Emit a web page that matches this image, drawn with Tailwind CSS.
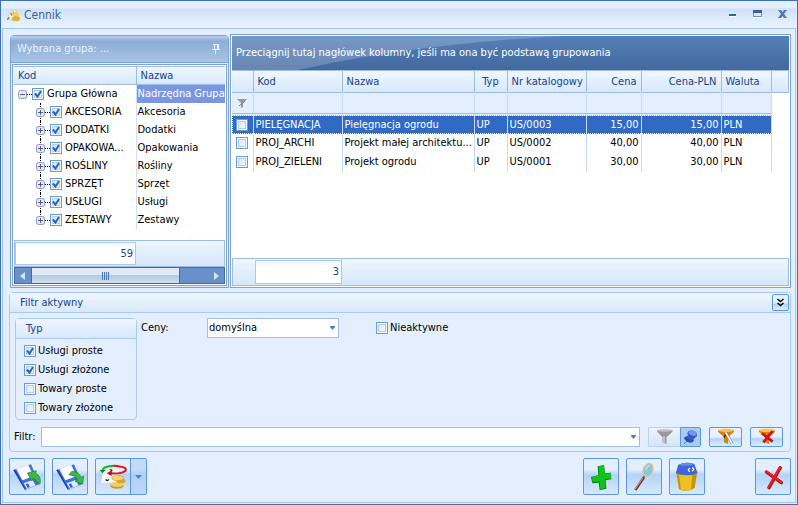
<!DOCTYPE html>
<html lang="pl">

<head>
    <meta charset="UTF-8">
    <meta name="viewport" content="width=device-width, initial-scale=1.0">
    <title>Cennik</title>
    <script src="https://cdn.jsdelivr.net/npm/@tailwindcss/browser@4"></script>
</head>

<body class="font-['DejaVu_Sans_Condensed','DejaVu_Sans',sans-serif] text-[11px] leading-4 text-black bg-[#e3efff]">

    <div class="min-h-screen flex flex-col border border-[#3c72b5] px-px pb-px">

        <!-- title bar -->
        <header class="h-[27px] shrink-0 flex items-center pl-1 pr-1 bg-linear-to-b from-[#e4f0ff] from-25% via-[#cfe1f8] via-30% to-[#ebf4ff]">
            <svg class="size-[14px]" viewBox="0 0 48 48">
                <path d="M6 38 14 10 34 6 40 30 24 42z" fill="#f4f4f4" stroke="#bbb" stroke-width="2" />
                <path d="M4 40l8-8M16 16l4 10M24 12l3 6" stroke="#666" stroke-width="4" />
                <ellipse cx="32" cy="22" rx="12" ry="8" fill="#f3d054" />
                <ellipse cx="34" cy="36" rx="14" ry="9" fill="#e0b42c" />
            </svg>
            <h1 class="pl-1 text-xs text-[#3a5f97]">Cennik</h1>
            <div class="ml-auto flex gap-[5px]">
                <button aria-label="Minimalizuj" class="size-5 grid place-items-center">
                    <svg class="size-3" viewBox="0 0 12 12" shape-rendering="crispEdges"><path d="M3 5h7v2H3z" fill="#3d5f96" /><path d="M3 7h7v1H3z" fill="#fff" /></svg>
                </button>
                <button aria-label="Maksymalizuj" class="size-5 grid place-items-center">
                    <svg class="size-3" viewBox="0 0 12 12" shape-rendering="crispEdges"><path d="M2 1h9v3H2z" fill="#3d5f96" /><path d="M2 4h1v3h7V4h1v4H2z" fill="#7393c2" /><path d="M2 8h9v1H2z" fill="#fff" /></svg>
                </button>
                <button aria-label="Zamknij okno" class="size-5 grid place-items-center">
                    <svg class="size-3" viewBox="0 0 12 12"><path d="M2 1h3l1.500 2L8 1h3L8 5l3 4H8L6.500 7 5 9H2l3-4z" fill="#5577ad" /></svg>
                </button>
            </div>
        </header>

        <main class="flex-1 flex flex-col border border-[#a3c5f0] pl-1.5 pr-1 pt-[5px] pb-[7px]">

            <div class="flex gap-px pl-px">

                <!-- group tree -->
                <section class="w-[219px] shrink-0 mt-px flex flex-col border border-[#7ba3d6] rounded-t-sm">
                    <div class="h-[26px] flex items-center justify-between pl-1.5 pr-2 bg-linear-to-b from-[#b9cfeb] via-[#8dadd6] via-20% to-[#a9c4e6] text-[#e8f1fc]">
                        <h2>Wybrana grupa: ...</h2>
                        <button aria-label="Przypnij">
                            <svg class="w-2 h-3" viewBox="0 0 8 12" shape-rendering="crispEdges"><path d="M1 1h6v1H1zM2 2h1v4H2zM5 2h2v4H5zM0 6h8v1H0zM3 7h1v4H3z" fill="#e8f1fc" /></svg>
                        </button>
                    </div>
                    <div class="flex-1 flex flex-col border-t border-[#7ba3d6] p-px">
                        <div class="flex-1 flex flex-col border border-[#7ba3d6] bg-white p-px overflow-hidden">
                            <table class="w-full table-fixed">
                                <colgroup>
                                    <col class="w-[122px]">
                                    <col>
                                </colgroup>
                                <thead>
                                    <tr class="h-[18px] bg-linear-to-b from-[#f0f7ff] to-[#d6e7fa] text-left text-[#15428b]">
                                        <th class="border-y border-r border-[#9ebbe0] pl-1 font-normal">Kod</th>
                                        <th class="border-y border-[#9ebbe0] pl-1 font-normal">Nazwa</th>
                                    </tr>
                                </thead>
                                <tbody id="treeRows"></tbody>
                            </table>
                            <div class="mt-auto h-[27px] shrink-0 flex border border-[#9ebbe0] bg-linear-to-b from-[#eff6ff] to-[#d6e7fa] text-[#15428b]">
                                <output class="w-[121px] m-px ml-0 border border-[#b0c8e6] bg-linear-to-b from-[#f0f6fe] to-white to-30% text-right px-0.5 leading-[22px]">59</output>
                            </div>
                            <div class="h-[17px] shrink-0 flex border border-[#3f69ad] bg-[#6890cb]">
                                <button aria-label="Przewiń w lewo" class="w-4 grid place-items-center"><svg class="size-2" viewBox="0 0 8 8"><path d="M6 0v8L1 4z" fill="#d4e4fa" /></svg></button>
                                <div class="w-[149px] border-x border-[#3f69ad] bg-linear-to-b from-[#e0e9f5] from-45% via-[#b4c8e2] via-50% to-[#cfdef0] flex justify-center items-center gap-px">
                                    <i class="w-px h-2 bg-[#4a75b5]"></i><i class="w-px h-2 bg-[#4a75b5]"></i><i class="w-px h-2 bg-[#4a75b5]"></i><i class="w-px h-2 bg-[#4a75b5]"></i>
                                </div>
                                <button aria-label="Przewiń w prawo" class="w-4 ml-auto grid place-items-center"><svg class="size-2" viewBox="0 0 8 8"><path d="M2 0v8l5-4z" fill="#d4e4fa" /></svg></button>
                            </div>
                        </div>
                    </div>
                </section>

                <!-- price list -->
                <section class="flex-1 min-w-0 h-[254px] flex flex-col border border-[#7ba3d6] bg-white p-px">
                    <div class="relative h-[34px] flex items-center px-1 bg-linear-to-b from-[#5580b8] to-[#42699f] text-white">
                        <svg class="absolute inset-0 w-full h-full" viewBox="0 0 556 33" preserveAspectRatio="none"><path d="M0 0H330Q180 8 66 33H0z" fill="#fff" fill-opacity=".2" /></svg>
                        <p class="relative">Przeciągnij tutaj nagłówek kolumny, jeśli ma ona być podstawą grupowania</p>
                    </div>
                    <table class="w-full table-fixed">
                        <colgroup>
                            <col class="w-[21px]">
                            <col class="w-[89px]">
                            <col class="w-[132px]">
                            <col class="w-[33px]">
                            <col class="w-[79px]">
                            <col class="w-[55px]">
                            <col class="w-[80px]">
                            <col class="w-[50px]">
                            <col>
                        </colgroup>
                        <thead>
                            <tr class="h-[22px] bg-linear-to-b from-[#f0f7ff] to-[#d6e7fa] text-left text-[#15428b] *:border-y *:border-r *:border-[#9ebbe0] *:font-normal *:px-1">
                                <td></td>
                                <th>Kod</th>
                                <th>Nazwa</th>
                                <th class="text-center">Typ</th>
                                <th class="whitespace-nowrap">Nr katalogowy</th>
                                <th class="text-right">Cena</th>
                                <th class="text-right">Cena-PLN</th>
                                <th>Waluta</th>
                                <td></td>
                            </tr>
                            <tr class="h-[22px] bg-[#e3efff] *:border-r *:border-b-3 *:border-double *:border-r-[#c9daf0] *:border-b-[#9ebbe0]">
                                <td>
                                    <svg class="size-2.5 mx-auto" viewBox="0 0 10 10"><path d="M0 1h10L6 5v4l-2 1V5z" fill="#999" /><path d="M2 8l6-5" stroke="#777" /></svg>
                                </td>
                                <td></td><td></td><td></td><td></td><td></td><td></td><td></td>
                                <td class="bg-white border-none!"></td>
                            </tr>
                        </thead>
                        <tbody id="priceRows"></tbody>
                    </table>
                    <div class="mt-auto h-7 border border-[#9ebbe0] bg-linear-to-b from-[#eff6ff] to-[#d6e7fa] pl-[22px] pt-px text-[#15428b]">
                        <output class="block w-[87px] h-6 border border-[#b0c8e6] bg-linear-to-b from-[#f0f6fe] to-white to-30% text-right px-0.5 leading-[22px]">3</output>
                    </div>
                </section>
            </div>

            <!-- filter -->
            <section class="mt-1 border border-[#a9c9f5] rounded-sm">
                <div class="h-5 flex items-center justify-between pl-2.5 pr-px border-b border-[#a9c9f5] bg-linear-to-b from-[#eff6ff] to-[#d9e8fb] text-[#15428b]">
                    <h2>Filtr aktywny</h2>
                    <button aria-label="Zwiń filtr" class="size-[17px] grid place-items-center border border-[#5b97e5] rounded-xs bg-linear-to-b from-[#e6f1fd] from-50% via-[#b4d4f7] via-60% to-[#dcecfc]">
                        <svg class="size-[9px]" viewBox="0 0 9 9"><path d="M1.500 1l3 2.500 3-2.500M1.500 5l3 2.500 3-2.500" fill="none" stroke="#000" stroke-width="1.500" /></svg>
                    </button>
                </div>
                <div class="flex items-start pt-[5px] px-[5px]">
                    <fieldset class="w-[122px] h-[102px] border border-[#a9c9f5] rounded-sm" aria-label="Typ">
                        <div class="h-5 pl-2.5 leading-5 border-b border-[#a9c9f5] bg-linear-to-b from-[#eff6ff] to-[#d9e8fb] text-[#15428b]">Typ</div>
                        <div id="typeOptions" class="pl-2 pt-0.5"></div>
                    </fieldset>
                    <label for="prices" class="w-[70px] pl-1 leading-5">Ceny:</label>
                    <div class="relative w-[132px]">
                        <select id="prices" class="appearance-none block w-full h-5 border border-[#a3bfe6] bg-white px-px">
                            <option>domyślna</option>
                        </select>
                        <svg class="absolute right-1 top-2 w-[5px] h-1 pointer-events-none" viewBox="0 0 5 4"><path d="M0 0h5v1L2.500 4 0 1z" fill="#4a7fc8" /></svg>
                    </div>
                    <div id="inactiveOption" class="pl-[37px]"></div>
                </div>
                <div class="flex items-center h-5 mt-[7px] mb-1 pl-1 pr-[7px]">
                    <label for="filter" class="w-[27px]">Filtr:</label>
                    <div class="relative flex-1">
                        <input id="filter" type="text" class="block w-full h-5 border border-[#a3bfe6] bg-white px-1">
                        <svg class="absolute right-1 top-2 w-[5px] h-1 pointer-events-none" viewBox="0 0 5 4"><path d="M0 0h5v1L2.500 4 0 1z" fill="#4a7fc8" /></svg>
                    </div>
                    <div class="flex ml-2 h-5">
                        <button aria-label="Filtr wyłączony" class="w-8 border border-r-0 border-[#b9d2f0] rounded-l-xs bg-linear-to-b from-[#eef5fd] to-[#d5e4f5]">
                            <svg class="size-full" viewBox="3 3 90 54">
                                <path d="M26 9h46v5L54 31v20l-12-5V31L26 14z" fill="#999" />
                                <ellipse cx="49" cy="10" rx="23" ry="4" fill="#c4c4c4" />
                                <path d="M44 28h5v20l-5-2z" fill="#ccc" />
                            </svg>
                        </button>
                        <button aria-label="Przypnij filtr" class="w-[21px] border border-[#5b97e5] rounded-r-xs bg-[#a9cbf2]">
                            <svg class="size-full" viewBox="3 3 57 54">
                                <path d="M22 42 12 50" stroke="#777" stroke-width="3" />
                                <ellipse cx="27" cy="37" rx="15" ry="9" transform="rotate(20 27 37)" fill="#2d51b4" />
                                <path d="M22 18 26 36 40 38 49 27z" fill="#3d63c8" />
                                <ellipse cx="37" cy="21" rx="15" ry="10" transform="rotate(20 37 21)" fill="#3157bd" />
                                <ellipse cx="38" cy="18" rx="13" ry="8" transform="rotate(20 38 18)" fill="#7595ea" />
                            </svg>
                        </button>
                    </div>
                    <button aria-label="Edytuj filtr" class="ml-2 w-[33px] h-5 border border-[#5b97e5] rounded-xs bg-linear-to-b from-[#e6f1fd] from-50% via-[#b4d4f7] via-60% to-[#dcecfc]">
                        <svg class="size-full" viewBox="3 3 93 54">
                            <path d="M27 9h48v5L57 31v20l-12-5V31L27 14z" fill="#d98308" />
                            <ellipse cx="51" cy="10" rx="24" ry="5" fill="#ffc14a" />
                            <path d="M53 16l-8 16" stroke="#222" stroke-width="4" />
                            <path d="M50 16 70 51" stroke="#777" stroke-width="8" />
                            <path d="M50 16 70 51" stroke="#fff" stroke-width="5" />
                        </svg>
                    </button>
                    <button aria-label="Wyczyść filtr" class="ml-2 w-[33px] h-5 border border-[#5b97e5] rounded-xs bg-linear-to-b from-[#e6f1fd] from-50% via-[#b4d4f7] via-60% to-[#dcecfc]">
                        <svg class="size-full" viewBox="3 3 93 54">
                            <path d="M27 9h48v5L57 31v20l-12-5V31L27 14z" fill="#d98308" />
                            <ellipse cx="51" cy="10" rx="24" ry="5" fill="#ffc14a" />
                            <path d="M36 19 68 44M68 12 40 46" stroke="#d40d14" stroke-width="8" />
                        </svg>
                    </button>
                </div>
            </section>

            <!-- actions -->
            <div class="flex gap-[7px] mt-1.5 *:h-[37px] *:border *:border-[#5b97e5] *:rounded-xs *:bg-linear-to-b *:from-[#e3effd] *:from-30% *:via-[#b3d3f7] *:via-45% *:to-[#d7e9fc]">
                <button aria-label="Wczytaj" class="w-9">
                    <svg class="size-full" viewBox="3 3 102 105">
                        <path d="M13 36 66 19 92 78 48 96z" fill="#3b6fe6" />
                        <path d="M13 36 48 96 47 88 18 35z" fill="#1a3f9e" />
                        <path d="M22 33 58 21 74 55 40 67z" fill="#fff" />
                        <path d="M44 76 70 66 80 82 54 93z" fill="#e4e8ef" />
                        <path d="M50 79l7-3 6 11-7 3z" fill="#2f62dd" />
                        <path d="M55 45 82 38 80 46Q98 54 93 78L82 72Q82 64 72 61L68 69z" fill="#3cb843" stroke="#1c8426" stroke-width="2" />
                    </svg>
                </button>
                <button aria-label="Zapisz" class="w-9">
                    <svg class="size-full" viewBox="3 3 102 105">
                        <path d="M13 36 66 19 92 78 48 96z" fill="#3b6fe6" />
                        <path d="M13 36 48 96 47 88 18 35z" fill="#1a3f9e" />
                        <path d="M22 33 58 21 74 55 40 67z" fill="#fff" />
                        <path d="M44 76 70 66 80 82 54 93z" fill="#e4e8ef" />
                        <path d="M50 79l7-3 6 11-7 3z" fill="#2f62dd" />
                        <path d="M50 50 60 40Q82 42 87 58L95 54 92 78 69 70 77 65Q72 53 50 50z" fill="#3cb843" stroke="#1c8426" stroke-width="2" />
                    </svg>
                </button>
                <div class="w-[52px] flex">
                    <button aria-label="Przelicz ceny" class="w-[34px]">
                        <svg class="size-full" viewBox="3 3 102 105">
                            <path d="M24 38 74 32 64 74 18 76z" fill="#fafafa" stroke="#ddd" stroke-width="2" />
                            <path d="M32 64q6 8 9 0M46 34l6 6" fill="none" stroke="#222" stroke-width="4" />
                            <ellipse cx="66" cy="84" rx="20" ry="8" fill="#c9982c" />
                            <ellipse cx="66" cy="79" rx="20" ry="8" fill="#f0cf69" />
                            <ellipse cx="78" cy="69" rx="14" ry="7" fill="#d7a73a" />
                            <ellipse cx="68" cy="60" rx="18" ry="8" fill="#f5d775" stroke="#c9982c" stroke-width="2" />
                            <path d="M22 40Q22 24 58 23" fill="none" stroke="#15b828" stroke-width="6" />
                            <path d="M14 36 22 46 32 36z" fill="#0c8d1c" />
                            <path d="M56 23Q98 26 92 38Q80 48 48 46" fill="none" stroke="#dc1420" stroke-width="6" />
                            <path d="M50 37 35 46 50 54z" fill="#c80d18" />
                        </svg>
                    </button>
                    <button aria-label="Więcej" class="flex-1 border-l border-[#5b97e5] bg-[#aacdf5]/60 grid place-items-center">
                        <svg class="w-[7px] h-1" viewBox="0 0 7 4"><path d="M0 0h7L3.500 4z" fill="#5580b8" /></svg>
                    </button>
                </div>
                <button aria-label="Dodaj" class="w-9 ml-auto">
                    <svg class="size-full" viewBox="3 3 102 105">
                        <path d="M44 25 63 21 66 46 84 44 85 64 68 67 70 92 50 97 47 74 28 76 24 57 46 52z" fill="#08850f" />
                        <path d="M47 25 63 21 65 47 84 44 84 61 66 64 67 90 52 94 50 70 29 72 27 57 49 52z" fill="#10c41c" />
                    </svg>
                </button>
                <button aria-label="Pokaż" class="w-9">
                    <svg class="size-full" viewBox="3 3 102 105">
                        <path d="M54 58 28 96" stroke="#6b4034" stroke-width="8" />
                        <path d="M52 58 27 94" stroke="#d59a82" stroke-width="3" />
                        <path d="M58 48 51 61" stroke="#555" stroke-width="4" />
                        <ellipse cx="66" cy="36" rx="14" ry="20" transform="rotate(24 66 36)" fill="#88c6dc" stroke="#dcc48c" stroke-width="4" />
                        <path d="M60 36Q62 24 72 23" fill="none" stroke="#b4e0ee" stroke-width="5" />
                    </svg>
                </button>
                <button aria-label="Usuń" class="w-9">
                    <svg class="size-full" viewBox="3 3 102 105">
                        <path d="M22 46 84 46 77 90Q52 106 30 94z" fill="#c4950c" />
                        <path d="M30 50 70 52 66 97Q48 100 36 95z" fill="#eec122" />
                        <path d="M28 20Q50 10 76 18L86 46Q56 58 20 46z" fill="#3f66d8" />
                        <path d="M28 20Q50 10 76 18Q56 28 28 20z" fill="#6889ec" />
                        <path d="M62 30l-4 6 4 6M70 28l4 6-4 6" fill="none" stroke="#fff" stroke-width="4" />
                    </svg>
                </button>
                <button aria-label="Zamknij" class="w-9 ml-[43px]">
                    <svg class="size-full" viewBox="3 3 102 105">
                        <path d="M34 42 79 74M76 29 42 89" stroke="#a01018" stroke-width="10" stroke-linecap="round" />
                        <path d="M34 41 79 72M75 28 41 87" stroke="#ee1c24" stroke-width="7" stroke-linecap="round" />
                    </svg>
                </button>
            </div>
        </main>
    </div>

    <script>
        const groups = [
            { code: 'AKCESORIA', name: 'Akcesoria' },
            { code: 'DODATKI', name: 'Dodatki' },
            { code: 'OPAKOWA...', name: 'Opakowania' },
            { code: 'ROŚLINY', name: 'Rośliny' },
            { code: 'SPRZĘT', name: 'Sprzęt' },
            { code: 'USŁUGI', name: 'Usługi' },
            { code: 'ZESTAWY', name: 'Zestawy' },
        ];

        const items = [
            { code: 'PIELĘGNACJA', name: 'Pielęgnacja ogrodu', type: 'UP', no: 'US/0003', price: '15,00', selected: true },
            { code: 'PROJ_ARCHI', name: 'Projekt małej architektu...', type: 'UP', no: 'US/0002', price: '40,00' },
            { code: 'PROJ_ZIELENI', name: 'Projekt ogrodu', type: 'UP', no: 'US/0001', price: '30,00' },
        ];

        const types = [
            { label: 'Usługi proste', checked: true },
            { label: 'Usługi złożone', checked: true },
            { label: 'Towary proste', checked: false },
            { label: 'Towary złożone', checked: false },
        ];

        const renderCheck = (checked, label = '') => `
            <span class="relative block size-3 shrink-0">
                <input type="checkbox" ${checked ? 'checked' : ''} ${label ? `aria-label="${label}"` : ''}
                       class="peer appearance-none block size-3 border border-[#6b9bd8] bg-linear-to-br from-[#cfdff2] to-white shadow-[inset_0_0_0_1px_#f4f9ff,inset_0_0_0_2px_#b5cdea]">
                <svg class="absolute inset-0 size-3 hidden peer-checked:block pointer-events-none" viewBox="0 0 12 12"><path d="M3 5.500 5.500 8.500 9 3" fill="none" stroke="#2468b4" stroke-width="2" /></svg>
            </span>`;

        const renderOption = (option) => `
            <label class="flex items-center gap-0.5 h-[19px] whitespace-nowrap">
                ${renderCheck(option.checked)}
                <span>${option.label}</span>
            </label>`;

        const renderNode = (open) => `
            <svg class="size-[9px] shrink-0" viewBox="0 0 9 9">
                <rect x=".5" y=".5" width="8" height="8" rx="2" fill="#e4e8f2" stroke="#8e99b8" />
                <path d="${open ? 'M2 4.5h5' : 'M2 4.5h5M4.5 2v5'}" stroke="#4f5f8c" />
            </svg>`;

        const renderGroup = (group, index) => `
            <tr class="h-[18px]">
                <td class="border-r border-[#d0e0f4] pl-[22px]">
                    <div class="relative flex items-center h-[18px]">
                        <i class="absolute left-1 top-0 border-l border-dotted border-black ${index === groups.length - 1 ? 'h-2' : 'h-[18px]'}"></i>
                        <span class="relative">${renderNode(false)}</span>
                        <i class="w-[5px] border-t border-dotted border-black"></i>
                        ${renderCheck(true, group.name)}
                        <span class="pl-[3px] whitespace-nowrap">${group.code}</span>
                    </div>
                </td>
                <td class="pl-px">${group.name}</td>
            </tr>`;

        const renderItem = (item) => `
            <tr class="h-[19px] *:border-r *:border-[#c9daf0] ${item.selected ? 'bg-[#316ac5] text-white outline-1 outline-dotted outline-white -outline-offset-1' : ''}">
                <td class="pl-1">${renderCheck(false, item.code)}</td>
                <td class="pl-0.5 whitespace-nowrap">${item.code}</td>
                <td class="pl-0.5 whitespace-nowrap">${item.name}</td>
                <td class="pl-0.5">${item.type}</td>
                <td class="pl-0.5">${item.no}</td>
                <td class="pr-0.5 text-right">${item.price}</td>
                <td class="pr-0.5 text-right">${item.price}</td>
                <td class="pl-0.5">PLN</td>
                <td class="bg-white border-none!"></td>
            </tr>`;

        document.getElementById('treeRows').innerHTML = `
            <tr class="h-[18px]">
                <td class="border-r border-[#d0e0f4] pl-1">
                    <div class="flex items-center h-[18px]">
                        ${renderNode(true)}
                        <i class="w-[5px] border-t border-dotted border-black"></i>
                        ${renderCheck(true, 'Grupa Główna')}
                        <span class="pl-[3px] whitespace-nowrap">Grupa Główna</span>
                    </div>
                </td>
                <td class="pl-px whitespace-nowrap bg-[#7b96e0] text-white">Nadrzędna Grupa</td>
            </tr>` + groups.map(renderGroup).join('');
        document.getElementById('priceRows').innerHTML = items.map(renderItem).join('');
        document.getElementById('typeOptions').innerHTML = types.map(renderOption).join('');
        document.getElementById('inactiveOption').innerHTML = renderOption({ label: 'Nieaktywne', checked: false });
    </script>
</body>

</html>
